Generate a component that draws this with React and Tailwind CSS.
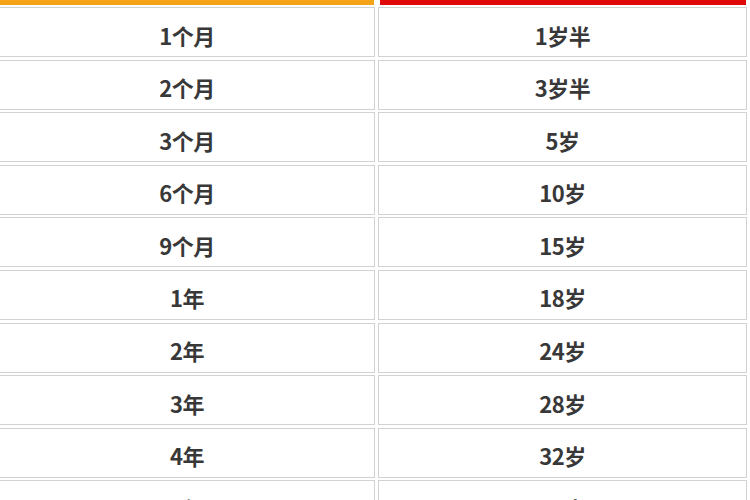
const rows = [
  ['1个月', '1岁半'],
  ['2个月', '3岁半'],
  ['3个月', '5岁'],
  ['6个月', '10岁'],
  ['9个月', '15岁'],
  ['1年', '18岁'],
  ['2年', '24岁'],
  ['3年', '28岁'],
  ['4年', '32岁'],
  ['5年', '36岁'],
];

export default function App() {
  return (
    <div
      className="w-[750px] h-[500px] overflow-hidden bg-white"
      style={{ fontFamily: '"Noto Sans CJK SC", "Noto Sans", sans-serif' }}
    >
      <div className="flex gap-[5px] h-[5px] w-[746px]">
        <div className="w-[374px] bg-[#f4a318]" />
        <div className="flex-1 ml-[1px] bg-[#e00a0a]" />
      </div>
      <div className="flex flex-col gap-[2.6px] mt-[2px] w-[747px]">
        {rows.map(([a, b], i) => (
          <div key={i} className="flex gap-[3px]">
            <div className="w-[376px] -ml-[1px] h-[50px] border border-[#d2d2d2] bg-white flex items-center justify-center pt-[6px] text-[22px] font-bold text-[#383838] tracking-[-0.5px]">
              {a}
            </div>
            <div className="flex-1 h-[50px] border border-[#d2d2d2] bg-white flex items-center justify-center pt-[6px] text-[22px] font-bold text-[#383838] tracking-[-0.5px]">
              {b}
            </div>
          </div>
        ))}
      </div>
    </div>
  );
}
